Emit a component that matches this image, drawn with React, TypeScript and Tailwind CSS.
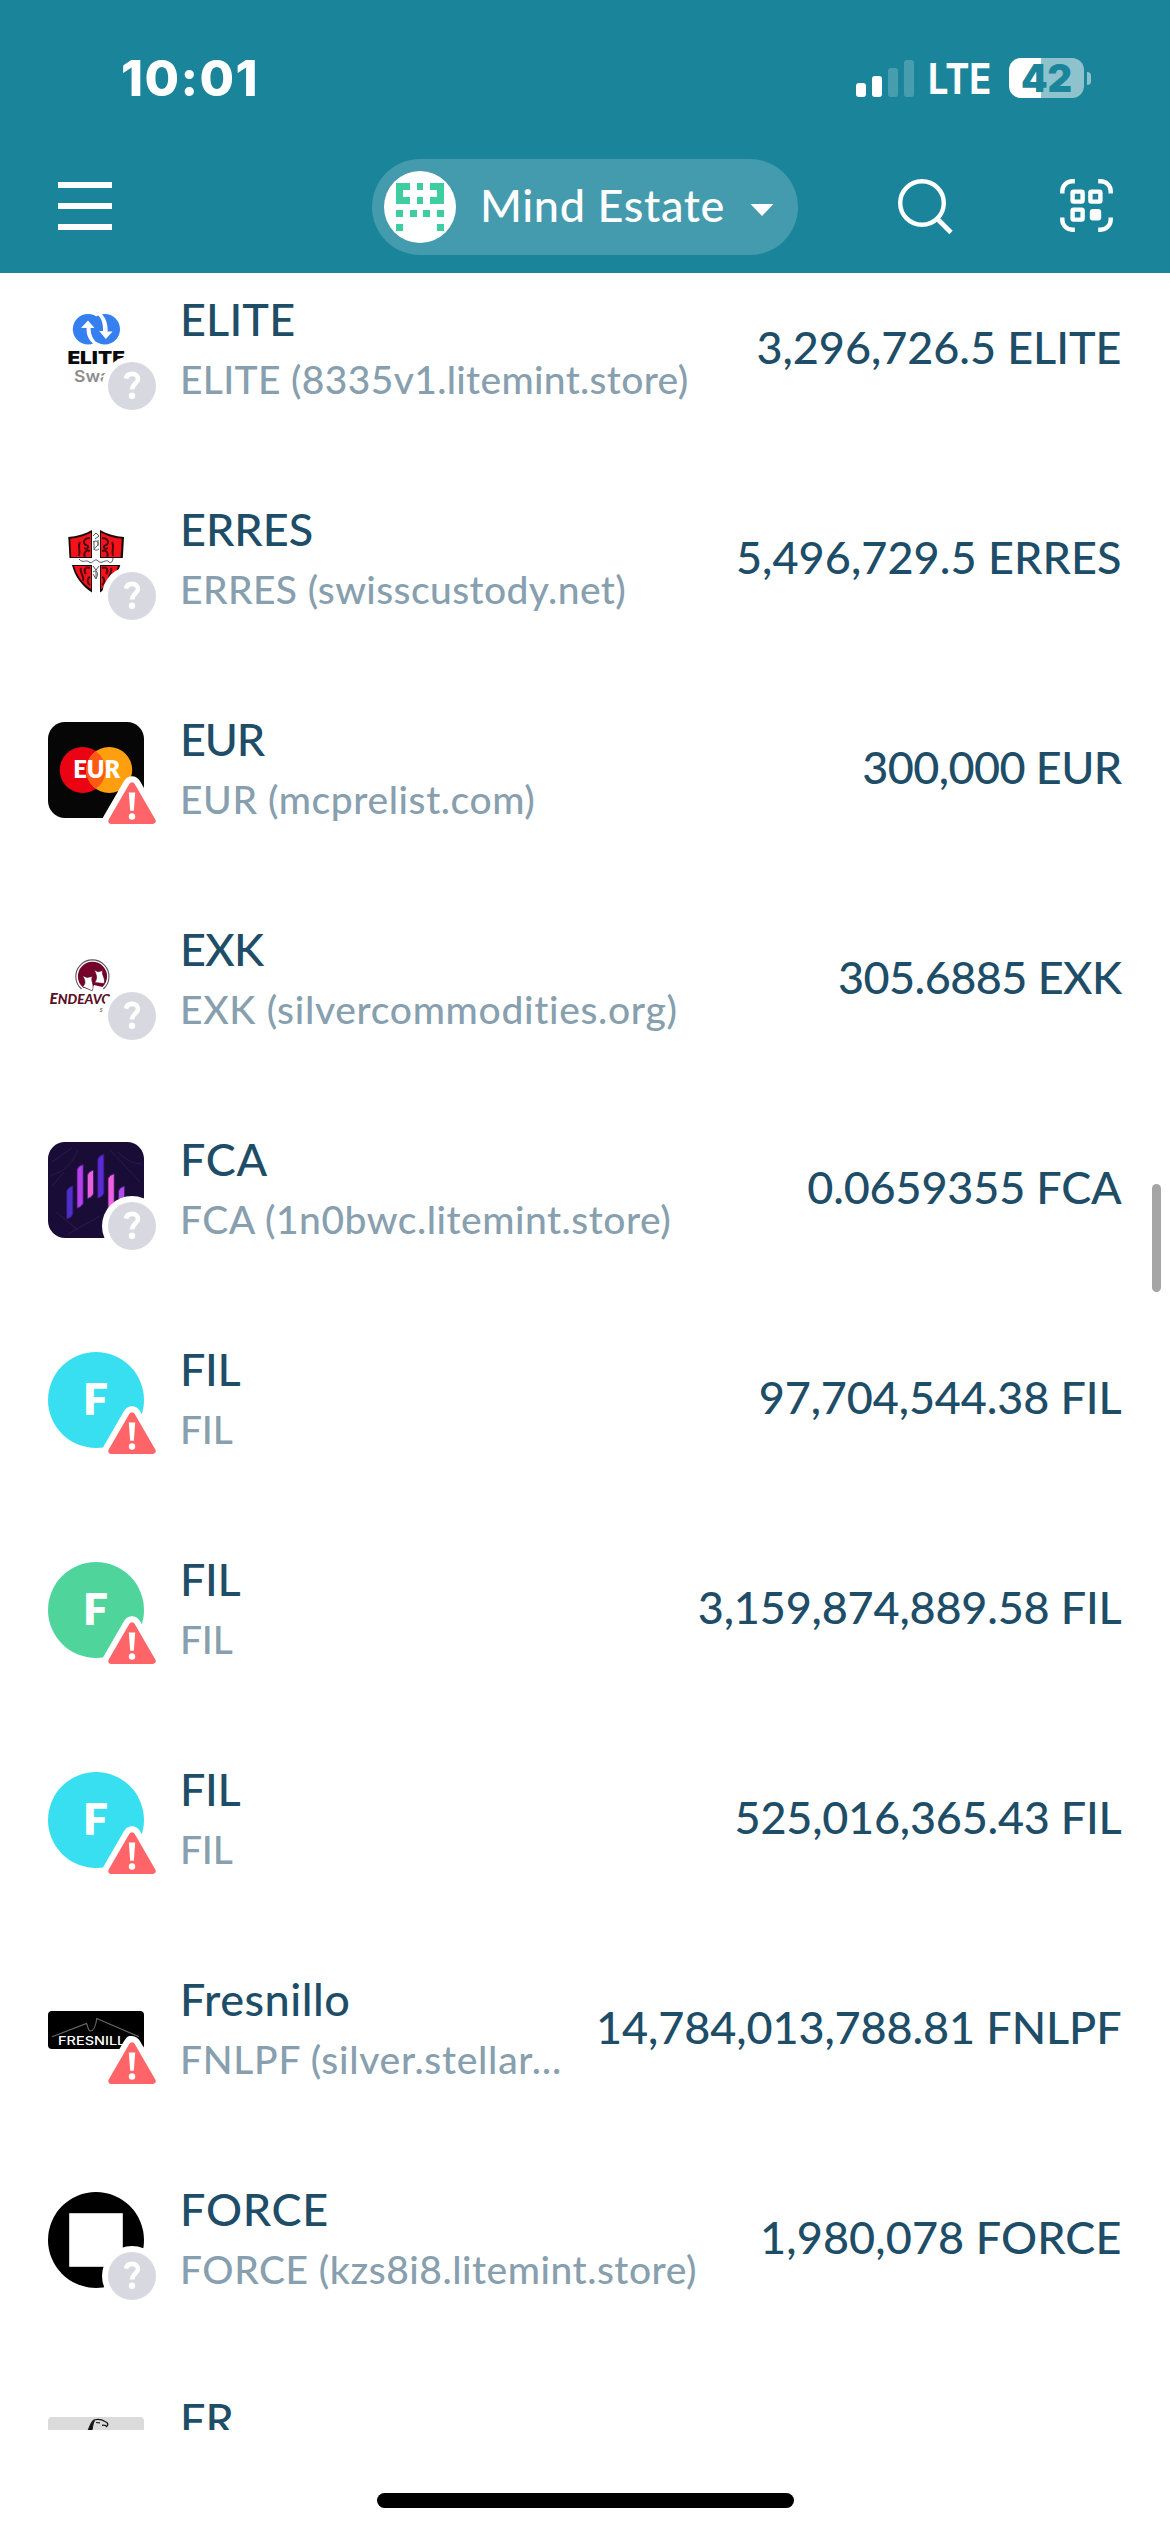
import type { ReactNode } from "react";

type Status = "unknown" | "danger";

interface Asset {
  icon: ReactNode;
  status?: Status;
  name: string;
  nameTracking?: string;
  detail: string;
  detailTracking?: string;
  amount: string;
  amountTracking?: string;
}

function IconFrame({ children }: { children: ReactNode }) {
  return (
    <svg viewBox="0 0 96 96" className="size-24">
      {children}
    </svg>
  );
}

function EliteIcon() {
  return (
    <IconFrame>
      <circle cx="40" cy="27.3" r="15.2" fill="#3580ee" />
      <circle cx="56.8" cy="27.3" r="15.2" fill="#3580ee" />
      <path d="M46.5 43 C40.5 38 38.3 33 38.6 26 H33 L40 18.5 L46.5 26 H42.6 C42.5 32 44.5 37 49.5 41.5 Z" fill="#fff" />
      <path d="M49.5 12.5 C54 17 55.2 22 55 29 H51.2 L57.8 37 L64.6 29.5 H59.6 C60 22 57.8 16 53 11 Z" fill="#fff" />
      <text x="19.4" y="61.7" fontSize="17.5" fontWeight="900" textLength="57.5" lengthAdjust="spacingAndGlyphs" fontFamily="Inter, sans-serif" fill="#0b0b0d">ELITE</text>
      <text x="26" y="79.5" fontSize="16.5" fontWeight="600" textLength="47" lengthAdjust="spacingAndGlyphs" fontFamily="Inter, sans-serif" fill="#8d8d8d">Swap</text>
    </IconFrame>
  );
}

function ErresIcon() {
  return (
    <IconFrame>
      <path d="M44 18 C37 22 29 24.5 20.3 25 L21.5 46 H44 Z M52 18 C59 22 67 24.5 76 25 L74.8 46 H52 Z M24 53 H44 V80.5 C34 74 27 65 24 53 Z M72.3 53 H52 V80.5 C62 74 69 65 72.3 53 Z" fill="#150607" />
      <path d="M43 20.5 C37 24 29 26.3 22.2 26.8 L23.2 45 H43 Z M53 20.5 C59 24 66 26 73.8 26.8 L72.6 45 H53 Z M26 54 H43 V77 C34 71 29 64 26 54 Z M70 54 H53 V77 C62 71 67 64 70 54 Z" fill="#f7121a" />
      <g fill="none" stroke="#4c0a10" strokeWidth="2">
        <path d="M42 26 C36 26 34 31 38 33 C42 34 40 38 36 36 M32 30 C29 35 33 39 31 44 M42 39 C38 37 35 41 37 45" />
        <path d="M54 26 C60 26 62 31 58 33 C54 34 56 38 60 36 M64 30 C67 35 63 39 65 44 M54 39 C58 37 61 41 59 45" />
        <path d="M42 56 C37 54 35 59 38 62 M33 56 C31 60 37 65 35 69 M42 65 C39 66 39 71 42 73" />
        <path d="M54 56 C59 54 61 59 58 62 M63 56 C65 60 59 65 61 69 M54 65 C57 66 57 71 54 73" />
      </g>
      <g fill="none" stroke="#55585a" strokeWidth="1">
        <path d="M45 24 L48 21 L51 24 L47 27 M45 30 C50 27 52 32 48 35 C45 37 47 40 51 37 M46 29 V38 M50 28 V34" />
        <path d="M31 47 C35 52 38 47 41 50 C44 53 47 45 50 49 C54 53 58 46 61 50 C63 52 65 49 65 46" />
        <path d="M45 54 L48 58 L51 54 M45 60 C49 57 51 61 48 67 L45 62 M48 58 V66" />
      </g>
    </IconFrame>
  );
}

function EurIcon() {
  return (
    <IconFrame>
      <rect width="96" height="96" rx="17" fill="#060606" />
      <circle cx="34.7" cy="48" r="23" fill="#eb0313" />
      <circle cx="61.2" cy="48" r="23" fill="#ff9f10" />
      <path d="M47.95 29.2 A23 23 0 0 1 47.95 66.8 A23 23 0 0 1 47.95 29.2 Z" fill="#ff5a13" />
      <text x="25.2" y="56.4" fontSize="23.8" fontWeight="800" textLength="47" lengthAdjust="spacingAndGlyphs" fontFamily="Lato, sans-serif" fill="#fff">EUR</text>
    </IconFrame>
  );
}

function EndeavourIcon() {
  return (
    <IconFrame>
      <path d="M33.5 57 A16.6 16.6 0 1 1 55.3 57" fill="none" stroke="#5b5559" strokeWidth="1.1" />
      <path d="M35 55.5 A14.6 14.6 0 1 1 54.5 55 L46 53 L43 58 Z" fill="#74022a" />
      <path d="M34.6 43.8 L39 45.5 L44.5 44.4 C42 49 47 52 44.2 58.8 L34.5 54.5 C38.5 52 37 48 34.6 43.8 Z" fill="#fff" stroke="#4a0620" strokeWidth="0.6" />
      <path d="M46 37.8 L50 39.8 L54.8 38.6 C53 43 57.8 46 56.2 51.5 L46.6 50.5 C50 47 48.5 42 46 37.8 Z" fill="#fff" stroke="#4a0620" strokeWidth="0.6" />
      <text x="1.4" y="72.2" fontSize="15.5" fontWeight="900" fontStyle="italic" textLength="80" lengthAdjust="spacingAndGlyphs" fontFamily="Lato, sans-serif" fill="#5a1226">
        E<tspan fontSize="13.6">NDEAVOUR</tspan>
      </text>
      <text x="51.6" y="80.3" fontSize="6.5" fontStyle="italic" fontFamily="Lato, sans-serif" fill="#4a4a4a">SILVER</text>
    </IconFrame>
  );
}

const fcaBars = [
  { x: 18.7, top: 44, bottom: 77, fill: "#4a31cc" },
  { x: 29, top: 22.5, bottom: 66.3, fill: "#b340ea" },
  { x: 39.3, top: 28, bottom: 56.7, fill: "#ea60df" },
  { x: 49.7, top: 12.3, bottom: 56.3, fill: "#5a2bd6" },
  { x: 60, top: 31.7, bottom: 66.5, fill: "#ef61e2" },
  { x: 70.4, top: 44, bottom: 77, fill: "#b04be4" },
];

function FcaIcon() {
  return (
    <IconFrame>
      <rect width="96" height="96" rx="17" fill="#190d38" />
      <path d="M4 20 L24 6 M8 70 L30 88 M62 8 L92 40 M4 44 L16 30 M70 10 C80 20 88 22 94 22 M30 8 C20 30 10 30 2 34 M20 92 L52 74" stroke="#2a1a4e" fill="none" />
      {fcaBars.map((b) => (
        <path
          key={b.x}
          d={`M${b.x} ${b.top + 5} Q${b.x + 1.5} ${b.top + 1} ${b.x + 6.2} ${b.top} V${b.bottom - 5} Q${b.x + 4.7} ${b.bottom - 1} ${b.x} ${b.bottom} Z`}
          fill={b.fill}
          stroke="#3c1567"
          strokeWidth="0.8"
        />
      ))}
    </IconFrame>
  );
}

function CyanLetter() {
  return (
    <div className="flex size-24 items-center justify-center rounded-full bg-[#38dff1] pr-px pb-1 text-[44px] leading-none font-extrabold text-white">F</div>
  );
}

function GreenLetter() {
  return (
    <div className="flex size-24 items-center justify-center rounded-full bg-[#4fd59b] pr-px pb-1 text-[44px] leading-none font-extrabold text-white">F</div>
  );
}

function FresnilloIcon() {
  return (
    <IconFrame>
      <rect y="29" width="96" height="38" rx="4" fill="#000" />
      <path d="M4.2 54.7 L38.5 41.5 C40 44 40 49 42.5 49 C46.5 49 48 42 48.8 36.5 L91 54.7" fill="none" stroke="#6a6a6a" strokeWidth="1.1" />
      <text x="10" y="63.2" fontSize="11.6" fontWeight="500" textLength="78" lengthAdjust="spacingAndGlyphs" fontFamily="Inter, sans-serif" fill="#fff">FRESNILLO</text>
    </IconFrame>
  );
}

function ForceIcon() {
  return (
    <IconFrame>
      <circle cx="48" cy="48" r="48" fill="#000" />
      <rect x="21.2" y="21.2" width="53.6" height="53.6" fill="#fff" />
    </IconFrame>
  );
}

function FrIcon() {
  return (
    <IconFrame>
      <rect y="15" width="96" height="66" rx="4" fill="#dbdbdb" />
      <path d="M40 29 C42 25 43 19.5 46 18 C50 16.8 54 17.5 57 19.5 C60.5 21 60.5 23 58.5 24.5 C58 22.8 56 23 54 23.3" fill="none" stroke="#151515" strokeWidth="1.3" />
      <path d="M40 30 C42.5 26 43 21 46.5 18.5 C44.5 22 44.5 27 43.5 30 Z" fill="#111" stroke="#111" />
      <path d="M48 20.5 L52 20.8" stroke="#222" strokeWidth="1.2" />
    </IconFrame>
  );
}

function StatusBadge({ status }: { status: Status }) {
  return (
    <svg viewBox="0 0 120 120" className="absolute top-0 left-0 size-[120px]">
      {status === "unknown" ? (
        <>
          <circle cx="84" cy="84" r="30" fill="#fff" />
          <circle cx="84" cy="84" r="24" fill="#d8d9e0" />
          <path d="M77.9 76.6 C78.7 73.3 81 71.9 84.2 71.9 C87.9 71.9 90 74 90 77 C90 81.6 84 81.8 84 87.6" fill="none" stroke="#fff" strokeWidth="4.6" />
          <circle cx="84" cy="93.8" r="3.2" fill="#fff" />
        </>
      ) : (
        <>
          <path d="M84 63.3 L104.7 99 H63.3 Z" fill="#fff" stroke="#fff" strokeWidth="18" strokeLinejoin="round" />
          <path d="M84 63.3 L104.7 99 H63.3 Z" fill="#ff6568" stroke="#ff6568" strokeWidth="6" strokeLinejoin="round" />
          <path d="M80.8 70.5 H87.2 L85.8 88.8 H82.2 Z" fill="#fff" />
          <circle cx="84" cy="94.5" r="3.2" fill="#fff" />
        </>
      )}
    </svg>
  );
}

const assets: Asset[] = [
  { icon: <EliteIcon />, status: "unknown", name: "ELITE", nameTracking: "tracking-[0.15px]", detail: "ELITE (8335v1.litemint.store)", detailTracking: "tracking-[0.32px]", amount: "3,296,726.5 ELITE", amountTracking: "tracking-[-0.06px]" },
  { icon: <ErresIcon />, status: "unknown", name: "ERRES", detail: "ERRES (swisscustody.net)", detailTracking: "tracking-[0.4px]", amount: "5,496,729.5 ERRES", amountTracking: "tracking-[0.06px]" },
  { icon: <EurIcon />, status: "danger", name: "EUR", nameTracking: "tracking-[-1.2px]", detail: "EUR (mcprelist.com)", detailTracking: "tracking-[0.57px]", amount: "300,000 EUR", amountTracking: "tracking-[-0.6px]" },
  { icon: <EndeavourIcon />, status: "unknown", name: "EXK", nameTracking: "tracking-[-0.7px]", detail: "EXK (silvercommodities.org)", detailTracking: "tracking-[0.68px]", amount: "305.6885 EXK", amountTracking: "tracking-[-0.55px]" },
  { icon: <FcaIcon />, status: "unknown", name: "FCA", nameTracking: "tracking-[0.68px]", detail: "FCA (1n0bwc.litemint.store)", detailTracking: "tracking-[0.51px]", amount: "0.0659355 FCA", amountTracking: "tracking-[-0.19px]" },
  { icon: <CyanLetter />, status: "danger", name: "FIL", nameTracking: "tracking-[-0.36px]", detail: "FIL", detailTracking: "tracking-[-0.22px]", amount: "97,704,544.38 FIL", amountTracking: "tracking-[-0.13px]" },
  { icon: <GreenLetter />, status: "danger", name: "FIL", nameTracking: "tracking-[-0.36px]", detail: "FIL", detailTracking: "tracking-[-0.22px]", amount: "3,159,874,889.58 FIL", amountTracking: "tracking-[-0.19px]" },
  { icon: <CyanLetter />, status: "danger", name: "FIL", nameTracking: "tracking-[-0.36px]", detail: "FIL", detailTracking: "tracking-[-0.22px]", amount: "525,016,365.43 FIL", amountTracking: "tracking-[-0.23px]" },
  { icon: <FresnilloIcon />, status: "danger", name: "Fresnillo", nameTracking: "tracking-[0.51px]", detail: "FNLPF (silver.stellar…", detailTracking: "tracking-[0.71px]", amount: "14,784,013,788.81 FNLPF", amountTracking: "tracking-[-0.11px]" },
  { icon: <ForceIcon />, status: "unknown", name: "FORCE", nameTracking: "tracking-[0.76px]", detail: "FORCE (kzs8i8.litemint.store)", detailTracking: "tracking-[0.52px]", amount: "1,980,078 FORCE", amountTracking: "tracking-[0.1px]" },
  { icon: <FrIcon />, name: "FR", detail: "", amount: "" },
];

function AssetRow({ asset }: { asset: Asset }) {
  return (
    <li className="flex h-[210px] items-center pr-[48.5px] pl-12">
      <div className="relative mr-9 size-24 shrink-0">
        {asset.icon}
        {asset.status && <StatusBadge status={asset.status} />}
      </div>
      <div className="self-start pt-[47px] whitespace-nowrap">
        <div className={`text-[45px] leading-[54px] text-[#1e4d68] ${asset.nameTracking ?? ""}`}>{asset.name}</div>
        <div className={`text-[39px] leading-[66px] text-[#879fae] ${asset.detailTracking ?? ""}`}>{asset.detail}</div>
      </div>
      <div className={`ml-auto pb-[7px] text-[45px] leading-[54px] whitespace-nowrap text-[#1e4d68] ${asset.amountTracking ?? ""}`}>{asset.amount}</div>
    </li>
  );
}

function StatusBar() {
  return (
    <div className="flex h-[156px] items-center pr-[79px] pl-[121px] font-['Inter',sans-serif] text-white">
      <span className="text-[50px] leading-none font-extrabold tracking-[1.4px]">10:01</span>
      <div className="ml-auto flex items-center">
        <div className="flex h-[37px] items-end gap-1.5">
          <span className="h-[14px] w-[10px] rounded-[3px] bg-white" />
          <span className="h-[21px] w-[10px] rounded-[3px] bg-white" />
          <span className="h-[29px] w-[10px] rounded-[3px] bg-white/20" />
          <span className="h-[37px] w-[10px] rounded-[3px] bg-white/20" />
        </div>
        <span className="ml-[14px] w-[64px] origin-left scale-x-[0.86] pt-0.5 text-[42px] leading-none font-bold">LTE</span>
        <div className="ml-[17px] flex h-10 w-[75px] items-center justify-center rounded-[12px] bg-[linear-gradient(90deg,#fff_43%,#8ec2cd_43%)] text-[38px] leading-none font-black text-[#1a859a]">
          <span>42</span>
        </div>
        <span className="ml-[3px] h-[13px] w-1 rounded-r-full bg-white/50" />
      </div>
    </div>
  );
}

const avatarRows = ["##.#.##", "#.....#", "##.#.##", ".......", "#.#.#.#", ".......", "#.....#"];

function Avatar() {
  return (
    <div className="flex size-[72px] items-center justify-center rounded-full bg-white">
      <svg viewBox="0 0 7 7" className="size-12" shapeRendering="crispEdges">
        {avatarRows.flatMap((row, y) =>
          [...row].map((cell, x) => (cell === "#" ? <rect key={`${x}-${y}`} x={x} y={y} width="1" height="1" fill="#3ecda0" /> : null)),
        )}
      </svg>
    </div>
  );
}

function NavBar() {
  return (
    <div className="flex h-[102px] items-center pl-[58px] text-white">
      <div className="flex w-[54px] flex-col gap-[15px] pb-[3px]">
        <span className="h-[6px] bg-white" />
        <span className="h-[6px] bg-white" />
        <span className="h-[6px] bg-white" />
      </div>
      <div className="ml-[260px] flex h-24 w-[426px] items-center rounded-full bg-[#459bae] pl-3">
        <Avatar />
        <span className="ml-6 pb-1 text-[45px] leading-[54px] tracking-[0.63px] whitespace-nowrap">Mind Estate</span>
        <svg viewBox="0 0 24 12" className="mt-[5px] ml-[25px] h-3 w-6">
          <path d="M0.5 0 H23.5 L12 12 Z" fill="#fff" />
        </svg>
      </div>
      <svg viewBox="0 0 56 56" className="ml-[99px] size-14" fill="none" stroke="#fff" strokeWidth="4.4">
        <circle cx="25" cy="24" r="21.8" />
        <path d="M40 39.5 L54 53.5" strokeWidth="4.8" />
      </svg>
      <svg viewBox="0 0 53 53" className="mb-[3px] ml-[107px] size-[53px]" fill="none" stroke="#fff" strokeWidth="4.4">
        <path d="M2.3 14.6 V12.5 A10 10 0 0 1 12.3 2.3 H14.8 M38.2 2.3 H40.7 A10 10 0 0 1 50.7 12.5 V14.6 M50.7 38.4 V40.7 A10 10 0 0 1 40.7 50.7 H38.2 M14.8 50.7 H12.3 A10 10 0 0 1 2.3 40.7 V38.4" />
        <rect x="12.6" y="12.6" width="10" height="10" rx="1" />
        <rect x="30.4" y="12.6" width="10" height="10" rx="1" />
        <rect x="12.6" y="30.6" width="10" height="10" rx="1" />
        <rect x="29.8" y="30" width="11.4" height="11.4" rx="3" fill="#fff" stroke="none" />
      </svg>
    </div>
  );
}

export default function App() {
  return (
    <div className="relative flex h-[2532px] w-[1170px] flex-col overflow-hidden bg-white font-['Lato',sans-serif] font-medium">
      <header className="h-[273px] shrink-0 bg-[#1a859a]">
        <StatusBar />
        <NavBar />
      </header>
      <main className="h-[2157px] shrink-0 overflow-hidden">
        <ul className="-mt-7">
          {assets.map((asset, i) => (
            <AssetRow key={i} asset={asset} />
          ))}
        </ul>
      </main>
      <footer className="flex flex-1 items-end justify-center pb-6">
        <div className="h-[15px] w-[417px] rounded-full bg-black" />
      </footer>
      <div className="absolute top-[1184px] right-[9px] h-[108px] w-[9px] rounded-full bg-[#a5a5a5]" />
    </div>
  );
}
